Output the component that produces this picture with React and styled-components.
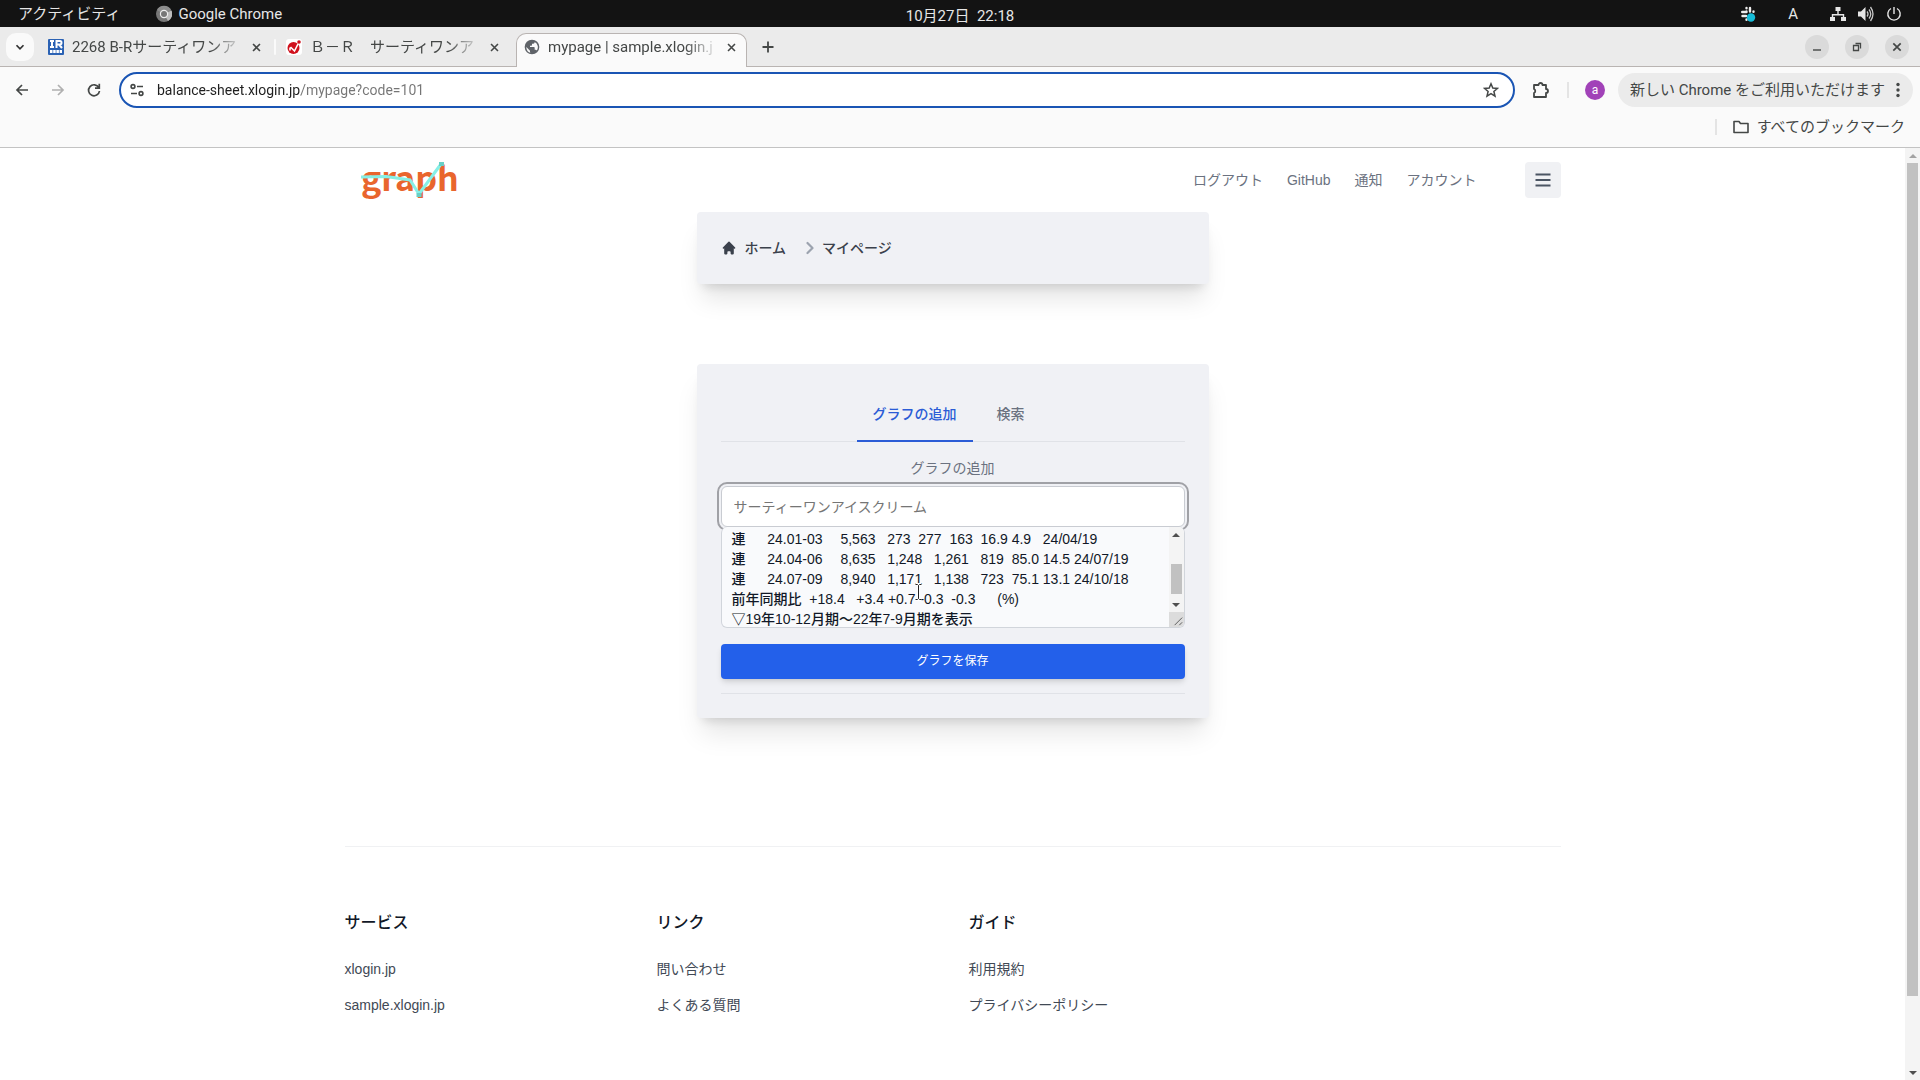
import React, { useLayoutEffect, useRef } from "react";
import styled, { createGlobalStyle } from "styled-components";

const GlobalStyle = createGlobalStyle`
  *, *::before, *::after { box-sizing: border-box; }
  body { margin: 0; overflow: hidden; }
  button, input, textarea { font: inherit; color: inherit; margin: 0; }
  button { border: 0; padding: 0; background: none; cursor: pointer; }
  a { color: inherit; text-decoration: none; }
  h2, ul, ol { margin: 0; padding: 0; list-style: none; font: inherit; }
  svg { display: block; flex: none; }
`;

const uiFont = `Roboto, "Noto Sans CJK JP", sans-serif`;
const pageFont = `"Liberation Sans", "Noto Sans CJK JP", sans-serif`;

const Desktop = styled.div`
  height: 100vh;
  display: flex;
  flex-direction: column;
  background: #fff;
  font: 15px/20px ${uiFont};
`;

/* ---------- system bar ---------- */

const SystemBar = styled.div`
  flex: none;
  height: 27px;
  display: grid;
  grid-template-columns: 1fr auto 1fr;
  align-items: center;
  padding: 0 18px;
  background: #131313;
  color: #e6e6e6;
`;

const SystemGroup = styled.div`
  display: flex;
  align-items: center;
  gap: ${(p) => p.$gap}px;
  justify-content: ${(p) => (p.$end ? "flex-end" : "flex-start")};
`;

const SystemItem = styled.button`
  display: flex;
  align-items: center;
  gap: 6px;
  white-space: nowrap;
`;

const Clock = styled.time`
  padding-top: 4px;
  white-space: pre;
`;

/* ---------- browser tabs ---------- */

const TabStrip = styled.div`
  flex: none;
  height: 40px;
  display: flex;
  align-items: stretch;
  background: #ebebeb;
  border-bottom: 1px solid #b9b4b2;
  color: #444746;
`;

const TabMenu = styled.button`
  width: 28px;
  height: 28px;
  margin: 6px 14px 0 6px;
  display: grid;
  place-items: center;
  border-radius: 10px;
  background: #fafafa;
  color: #333;
`;

const Tab = styled.div`
  width: ${(p) => p.$width}px;
  height: ${(p) => (p.$active ? 34 : 28)}px;
  margin-top: 6px;
  padding: ${(p) => (p.$active ? "0 7px 7px 7px" : "0")};
  display: flex;
  align-items: center;
  gap: 8px;
  ${(p) =>
    p.$active &&
    `
    background: #fafafa;
    border: 1px solid #b9b4b2;
    border-bottom: 0;
    border-radius: 10px 10px 0 0;
  `}
`;

const TabTitle = styled.span`
  flex: 1;
  min-width: 0;
  overflow: hidden;
  white-space: pre;
  mask-image: linear-gradient(to right, #000 82%, transparent 102%);
`;

const IconButton = styled.button`
  width: ${(p) => p.$size || 16}px;
  height: ${(p) => p.$size || 16}px;
  flex: none;
  display: grid;
  place-items: center;
  color: ${(p) => p.$color || "#444746"};
`;

const TabDivider = styled.span`
  width: 2px;
  height: 16px;
  margin: 12px 10px 0;
  border-radius: 1px;
  background: #fafafa;
`;

const TabSpacer = styled.span`
  width: 14px;
`;

const NewTab = styled(IconButton)`
  margin: 12px 0 0 13px;
`;

const WindowButtons = styled.div`
  margin: 8px 11px 0 auto;
  display: flex;
  gap: 16px;
`;

const WindowButton = styled(IconButton)`
  border-radius: 50%;
  background: #dadada;
`;

/* ---------- toolbar ---------- */

const Toolbar = styled.div`
  flex: none;
  height: 46px;
  display: flex;
  align-items: center;
  padding: 0 7px 0 12px;
  background: #fafafa;
  color: #444746;
`;

const NavButtons = styled.div`
  display: flex;
  gap: 16px;
  margin-right: 15px;
`;

const Omnibox = styled.div`
  flex: 1;
  height: 36px;
  display: flex;
  align-items: center;
  gap: 12px;
  padding: 0 14px 0 8px;
  border: 2px solid #1a55b4;
  border-radius: 18px;
  background: #fff;
`;

const UrlInput = styled.input`
  flex: 1;
  min-width: 0;
  padding: 0;
  border: 0;
  outline: 0;
  font-size: 14px;
  background: linear-gradient(to right, #1f1f1f 144px, #757575 144px);
  -webkit-background-clip: text;
  background-clip: text;
  -webkit-text-fill-color: transparent;
`;

const Actions = styled.div`
  display: flex;
  align-items: center;
  margin-left: 16px;
`;

const Divider = styled.span`
  width: 2px;
  height: 16px;
  margin: 0 ${(p) => p.$gap}px;
  background: #e4e4e4;
`;

const Avatar = styled.button`
  width: 20px;
  height: 20px;
  margin-right: 13px;
  border-radius: 50%;
  background: #a142b8;
  color: #fff;
  font-size: 12px;
  line-height: 18px;
`;

const UpdatePill = styled.button`
  height: 34px;
  display: flex;
  align-items: center;
  gap: 6px;
  padding: 0 8px 0 12px;
  border-radius: 17px;
  background: #ebebeb;
  white-space: nowrap;
`;

const BookmarkBar = styled.div`
  flex: none;
  height: 35px;
  display: flex;
  justify-content: flex-end;
  align-items: center;
  padding: 0 15px 6px 0;
  background: #fafafa;
  border-bottom: 1px solid #c3c3c3;
  color: #444746;
`;

const BookmarkLink = styled.button`
  display: flex;
  align-items: center;
  gap: 8px;
  white-space: nowrap;
`;

/* ---------- scrollbars ---------- */

const ScrollTrack = styled.div`
  flex: none;
  width: 15px;
  display: flex;
  flex-direction: column;
  align-items: center;
  background: #f4f4f4;
  color: #505050;
`;

const ScrollArrow = styled.span`
  flex: none;
  width: 15px;
  height: 15px;
  display: grid;
  place-items: center;
  color: ${(p) => (p.$muted ? "#a3a3a3" : "inherit")};
`;

const ScrollSpace = styled.span`
  flex: ${(p) => p.$share};
`;

const ScrollThumb = styled.span`
  flex: ${(p) => p.$share};
  width: 11px;
  background: #c1c1c1;
`;

const ResizeCorner = styled.span`
  width: 15px;
  height: 15px;
  flex: none;
  background: #dcdcdc;
  color: #555;
`;

/* ---------- page ---------- */

const Viewport = styled.div`
  flex: 1;
  min-height: 0;
  display: flex;
`;

const Page = styled.div`
  flex: 1;
  min-width: 0;
  overflow: hidden;
  font: 14px/20px ${pageFont};
  color: #111827;
`;

const Container = styled.div`
  max-width: 1280px;
  margin: 0 auto;
  padding: 0 32px;
`;

const Header = styled.header`
  height: 64px;
  display: flex;
  align-items: center;
  padding-left: 16px;
`;

const HeaderNav = styled.nav`
  display: flex;
  gap: 24px;
  margin: 0 48px 0 auto;
  color: #6b7280;
`;

const MenuButton = styled.button`
  width: 36px;
  height: 36px;
  display: grid;
  place-items: center;
  border-radius: 4px;
  background: #f0f1f4;
  color: #4b5563;
`;

const Main = styled.main`
  width: 512px;
  margin: 0 auto;
`;

const Card = styled.section`
  padding: ${(p) => p.$pad};
  margin-bottom: ${(p) => p.$after}px;
  border-radius: 4px;
  background: #f0f1f5;
  box-shadow: 0 20px 25px -5px rgba(0, 0, 0, 0.1), 0 8px 10px -6px rgba(0, 0, 0, 0.14);
`;

const Breadcrumb = styled.ol`
  display: flex;
  align-items: center;
  gap: 16px;
  font-weight: 500;
  color: #3b414c;
`;

const Crumb = styled.li`
  display: flex;
  align-items: center;

  a {
    display: flex;
    align-items: center;
    gap: 8px;
  }
`;

const TabList = styled.div`
  display: flex;
  justify-content: center;
  height: 54px;
  margin-bottom: 16px;
  border-bottom: 1px solid #e0e2e7;
`;

const PageTab = styled.button`
  height: 54px;
  margin-right: 8px;
  padding: 0 16px;
  font-weight: 500;
  color: ${(p) => (p.$active ? "#2b5cd6" : "#6b7280")};
  border-bottom: 2px solid ${(p) => (p.$active ? "#2b5cd6" : "transparent")};
`;

const Form = styled.form`
  display: flex;
  flex-direction: column;
  padding-bottom: 14px;
  border-bottom: 1px solid #e0e2e7;
`;

const FieldLabel = styled.label`
  margin-bottom: 8px;
  text-align: center;
  color: #6b7280;
`;

const NameInput = styled.input`
  height: 41px;
  padding: 0 12px;
  border: 1px solid #c9ccd2;
  border-radius: 6px;
  background: #fff;
  outline: 2px solid #a0a1a6;
  outline-offset: 2px;

  &::placeholder { color: #757575; opacity: 1; }
`;

const DataField = styled.div`
  position: relative;
  height: 101px;
  display: flex;
  margin-bottom: 16px;
  overflow: hidden;
  border: 1px solid #d1d5db;
  border-top: 0;
  border-radius: 6px;
  background: #f9fafc;
`;

const DataArea = styled.textarea`
  flex: 1;
  min-width: 0;
  padding: 8px 10px;
  border: 0;
  outline: 0;
  resize: none;
  overflow: hidden;
  background: transparent;
  line-height: 20px;
  font-weight: 500;
`;

const TextCursor = styled.svg`
  position: absolute;
  left: 192px;
  top: 56px;
`;

const SaveButton = styled.button`
  height: 35px;
  padding-bottom: 1px;
  border-radius: 4px;
  background: #2360ea;
  color: #fff;
  font-size: 12px;
  box-shadow: 0 4px 6px -1px rgba(0, 0, 0, 0.12), 0 2px 4px -2px rgba(0, 0, 0, 0.1);
`;

const Footer = styled.footer`
  display: grid;
  grid-template-columns: repeat(4, 1fr);
  gap: 32px;
  padding-top: 64px;
  border-top: 1px solid #f0f1f3;
`;

const FooterTitle = styled.h2`
  margin-bottom: 24px;
  font-size: 16px;
  line-height: 24px;
  font-weight: 500;
`;

const FooterLinks = styled.ul`
  display: flex;
  flex-direction: column;
  gap: 16px;
  color: #414955;
`;

/* ---------- drawings ---------- */

const Stroke = ({ size = 16, w = 2, box = 16, children }) => (
  <svg width={size} height={size} viewBox={`0 0 ${box} ${box}`} fill="none" stroke="currentColor" strokeWidth={w} aria-hidden="true">
    {children}
  </svg>
);

const CloseIcon = ({ size = 16 }) => (
  <Stroke size={size} w={1.7}><path d="M4.3 4.3l7.4 7.4M11.7 4.3l-7.4 7.4" /></Stroke>
);

const ChromeIcon = () => (
  <svg width="16" height="18" viewBox="0 0 16 16" aria-hidden="true">
    <circle cx="8" cy="8" r="8" fill="#777" />
    <path d="M8 8L1 4A8 8 0 0 1 15 4z" fill="#8c8c8c" />
    <path d="M8 8l4 7a8 8 0 0 0 3.500-10.500z" fill="#bdbdbd" />
    <circle cx="8" cy="8" r="4.200" fill="#eee" />
    <circle cx="8" cy="8" r="3" fill="#777" />
  </svg>
);

const BankIcon = () => (
  <svg width="16" height="16" viewBox="0 0 16 16" aria-hidden="true">
    <rect width="16" height="16" rx="1" fill="#2b62b4" />
    <g fill="none" stroke="#fff" strokeWidth="2">
      <path d="M2 2h4M4 2v6M2 8h4M8.500 9V2h3.500q1.500 0 1.500 1.700t-1.500 1.700H8.500M11 5.500l3 3.500" />
      <path d="M2 12.500h12" strokeWidth="3" strokeDasharray="2.500 .7" />
    </g>
  </svg>
);

const RedIcon = () => (
  <svg width="16" height="16" viewBox="0 0 16 16" aria-hidden="true">
    <rect width="16" height="16" rx="3" fill="#fff" />
    <circle cx="7.500" cy="9" r="6" fill="#d0101c" />
    <circle cx="13" cy="3" r="1.800" fill="#d0101c" />
    <path d="M4 8.500v3M4.500 8l4 4L12 5" fill="none" stroke="#fff" strokeWidth="1.600" />
  </svg>
);

const GlobeIcon = () => (
  <svg width="16" height="16" viewBox="0 0 24 24" fill="#5f6368" aria-hidden="true">
    <path d="M12 1a11 11 0 1 0 0 22 11 11 0 0 0 0-22zM3.500 12l5.500 5.500V19c0 .8.500 1.500 1.300 1.800A8.900 8.900 0 0 1 3.500 12zm15.700 5.400c-.3-.9-1.100-1.400-2-1.400H16v-3c0-.6-.4-1-1-1H9v-2h2c.6 0 1-.4 1-1V7h2c1.100 0 2-.9 2-2v-.5a8.900 8.900 0 0 1 3.200 12.900z" />
  </svg>
);

const SlackIcon = () => (
  <svg width="16" height="16" viewBox="0 0 16 16" aria-hidden="true">
    <g stroke="#eee" strokeWidth="2.400" strokeLinecap="round">
      <path d="M6.500 5.500V6M6.500 2v.2M10 2v3.500M2.200 6h4M13.500 5.500v.2M2.500 10H6M6.500 13.500v.2" />
    </g>
    <circle cx="11" cy="11.500" r="4.200" fill="#17bcd8" />
  </svg>
);

const NetworkIcon = () => (
  <svg width="16" height="16" viewBox="0 0 16 16" fill="#e6e6e6" aria-hidden="true">
    <path d="M5.500 1h5v4h-5zM0 11h5v4H0zM11 11h5v4h-5zM7.300 5h1.400v3h5.500v3h-1.400V9.400H3.200V11H1.800V8h5.500z" />
  </svg>
);

const SpeakerIcon = () => (
  <svg width="16" height="16" viewBox="0 0 16 16" aria-hidden="true">
    <path d="M0 5.500h3L7.500 1v14L3 10.500H0z" fill="#e6e6e6" />
    <path d="M9 5.500q2 2.500 0 5M11 3.500q3.500 4.500 0 9M12.500 1q5 7 0 14" fill="none" stroke="#c8c8c8" strokeWidth="1.300" />
  </svg>
);

const TuneIcon = () => (
  <Stroke w={1.6}><circle cx="4" cy="4.500" r="1.900" /><path d="M8 4.500h6M2 11.500h6" /><circle cx="12" cy="11.500" r="1.900" /></Stroke>
);

const HomeIcon = () => (
  <svg width="16" height="16" viewBox="0 0 20 20" fill="currentColor" aria-hidden="true">
    <path d="M10.700 2.300a1 1 0 0 0-1.400 0l-7 7a1 1 0 0 0 1.400 1.400l.3-.3V17a1 1 0 0 0 1 1h2a1 1 0 0 0 1-1v-2a1 1 0 0 1 1-1h2a1 1 0 0 1 1 1v2a1 1 0 0 0 1 1h2a1 1 0 0 0 1-1v-6.600l.3.3a1 1 0 0 0 1.400-1.400z" />
  </svg>
);

const Logo = () => (
  <svg width="112" height="60" viewBox="0 -6 112 60" role="img" aria-label="graph">
    <text x="0" y="35" fill="#e9652d" fontFamily="'Noto Sans CJK JP', sans-serif" fontWeight="700" fontSize="34">graph</text>
    <path d="M0 21L25 20.500 49 24 58 38 80 8" fill="none" stroke="#86efe6" strokeWidth="3" />
    <path d="M55.500 37h5v4h-5zM78 6h5v4h-5z" fill="#69cfc6" />
  </svg>
);

const Arrow = ({ down }) => (
  <svg width="8" height="4" viewBox="0 0 8 4" fill="currentColor" aria-hidden="true">
    <path d={down ? "M0 0h8L4 4z" : "M0 4h8L4 0z"} />
  </svg>
);

const Scrollbar = ({ before, thumb, after, corner }) => (
  <ScrollTrack aria-hidden="true">
    <ScrollArrow $muted={before === 0}><Arrow /></ScrollArrow>
    <ScrollSpace $share={before} />
    <ScrollThumb $share={thumb} />
    <ScrollSpace $share={after} />
    <ScrollArrow><Arrow down /></ScrollArrow>
    {corner && (
      <ResizeCorner>
        <Stroke size={15} w={1}><path d="M6 14l8-8M11 14l3-3" /></Stroke>
      </ResizeCorner>
    )}
  </ScrollTrack>
);

/* ---------- content ---------- */

const results = [
  "", "", "", "",
  "連　  24.01-03　 5,563   273  277  163  16.9 4.9   24/04/19",
  "連　  24.04-06　 8,635   1,248   1,261   819  85.0 14.5 24/07/19",
  "連　  24.07-09　 8,940   1,171   1,138   723  75.1 13.1 24/10/18",
  "前年同期比  +18.4   +3.4 +0.7 -0.3  -0.3　  (%)",
  "▽19年10-12月期〜22年7-9月期を表示",
].join("\n");

const footerColumns = [
  { title: "サービス", links: ["xlogin.jp", "sample.xlogin.jp"] },
  { title: "リンク", links: ["問い合わせ", "よくある質問"] },
  { title: "ガイド", links: ["利用規約", "プライバシーポリシー"] },
];

const BrowserTab = ({ icon, title, active, width }) => (
  <Tab $active={active} $width={width}>
    {icon}
    <TabTitle>{title}</TabTitle>
    <IconButton aria-label="閉じる"><CloseIcon size={15} /></IconButton>
  </Tab>
);

export default function App() {
  const area = useRef(null);

  useLayoutEffect(() => {
    const el = area.current;
    el.scrollTop = el.scrollHeight - el.clientHeight - 10;
  }, []);

  return (
    <Desktop>
      <GlobalStyle />
      <SystemBar>
        <SystemGroup $gap={36}>
          <SystemItem>アクティビティ</SystemItem>
          <SystemItem><ChromeIcon />Google Chrome</SystemItem>
        </SystemGroup>
        <Clock>10月27日  22:18</Clock>
        <SystemGroup $gap={12} $end>
          <SystemGroup $gap={32}>
            <SlackIcon />
            <span>A</span>
            <NetworkIcon />
          </SystemGroup>
          <SpeakerIcon />
          <Stroke w={1.4}><path d="M8 1v7M5 2.500a6.200 6.200 0 1 0 6 0" /></Stroke>
        </SystemGroup>
      </SystemBar>

      <TabStrip>
        <TabMenu aria-label="タブを検索"><Stroke size={14} w={2}><path d="M4 6l4 4 4-4" /></Stroke></TabMenu>
        <BrowserTab icon={<BankIcon />} title="2268 B-Rサーティワンア" width={216} />
        <TabDivider />
        <BrowserTab icon={<RedIcon />} title="Ｂ－Ｒ　サーティワンア" width={216} />
        <TabSpacer />
        <BrowserTab icon={<GlobeIcon />} title="mypage | sample.xlogin.j" width={231} active />
        <NewTab aria-label="新しいタブ"><Stroke w={1.8}><path d="M8 2.500v11M2.500 8h11" /></Stroke></NewTab>
        <WindowButtons>
          <WindowButton $size={24} aria-label="最小化"><Stroke w={1.4}><path d="M4 11h8" /></Stroke></WindowButton>
          <WindowButton $size={24} aria-label="元に戻す"><Stroke w={1.3}><path d="M4.500 6.500h5v5h-5zM6.500 4.500h5v5" /></Stroke></WindowButton>
          <WindowButton $size={24} aria-label="閉じる"><CloseIcon /></WindowButton>
        </WindowButtons>
      </TabStrip>

      <Toolbar>
        <NavButtons>
          <IconButton $size={20} aria-label="戻る"><Stroke w={1.7}><path d="M14 8H3M8 3L3 8l5 5" /></Stroke></IconButton>
          <IconButton $size={20} $color="#b0b0b0" aria-label="進む"><Stroke w={1.7}><path d="M2 8h11M8 3l5 5-5 5" /></Stroke></IconButton>
          <IconButton $size={20} aria-label="再読み込み"><Stroke w={1.7}><path d="M12.800 5.500A5.500 5.500 0 1 0 13.500 9M13.300 1.800v4.400H9" /></Stroke></IconButton>
        </NavButtons>
        <Omnibox>
          <TuneIcon />
          <UrlInput aria-label="アドレス" defaultValue="balance-sheet.xlogin.jp/mypage?code=101" />
          <IconButton aria-label="ブックマークに追加">
            <Stroke w={1.5}><path d="M8 1.800l1.800 4.200 4.700.4-3.600 3.100 1.100 4.600L8 11.700l-4 2.400 1.100-4.600L1.500 6.400 6.200 6z" /></Stroke>
          </IconButton>
        </Omnibox>
        <Actions>
          <IconButton $size={20} aria-label="拡張機能">
            <Stroke size={18} w={1.8} box={18}><path d="M2 4h4.500a2 2 0 0 1 4 0H14v4a2 2 0 0 1 0 4v4H2v-4a2.200 2.200 0 0 0 0-4z" strokeLinejoin="round" /></Stroke>
          </IconButton>
          <Divider $gap={16} />
          <Avatar>a</Avatar>
          <UpdatePill>
            新しい Chrome をご利用いただけます
            <svg width="14" height="16" viewBox="0 0 14 16" fill="currentColor" aria-hidden="true">
              <circle cx="7" cy="2.500" r="1.700" /><circle cx="7" cy="8" r="1.700" /><circle cx="7" cy="13.500" r="1.700" />
            </svg>
          </UpdatePill>
        </Actions>
      </Toolbar>
      <BookmarkBar>
        <Divider $gap={16} />
        <BookmarkLink>
          <Stroke size={16} w={1.6}><path d="M1 2.500h5l1.500 2H15v9H1z" strokeLinejoin="round" /></Stroke>
          すべてのブックマーク
        </BookmarkLink>
      </BookmarkBar>

      <Viewport>
        <Page>
          <Container>
            <Header>
              <a href="#top"><Logo /></a>
              <HeaderNav>
                <a href="#logout">ログアウト</a>
                <a href="#github">GitHub</a>
                <a href="#notice">通知</a>
                <a href="#account">アカウント</a>
              </HeaderNav>
              <MenuButton aria-label="メニュー"><Stroke w={2}><path d="M.5 2.500h15M.5 8h15M.5 13.500h15" /></Stroke></MenuButton>
            </Header>
          </Container>

          <Main>
            <Card as="nav" $pad="26px 24px" $after={80}>
              <Breadcrumb>
                <Crumb><a href="#home"><HomeIcon />ホーム</a></Crumb>
                <Crumb>
                  <a href="#mypage">
                    <svg width="12" height="14" viewBox="0 0 12 14" fill="none" stroke="#9ca3af" strokeWidth="2.200" strokeLinecap="round" strokeLinejoin="round" aria-hidden="true"><path d="M5.500 2l5 5-5 5" /></svg>
                    マイページ
                  </a>
                </Crumb>
              </Breadcrumb>
            </Card>

            <Card $pad="24px" $after={128}>
              <TabList role="tablist">
                <PageTab role="tab" aria-selected="true" $active>グラフの追加</PageTab>
                <PageTab role="tab" aria-selected="false">検索</PageTab>
              </TabList>
              <Form onSubmit={(e) => e.preventDefault()}>
                <FieldLabel htmlFor="name">グラフの追加</FieldLabel>
                <NameInput id="name" placeholder="サーティーワンアイスクリーム" />
                <DataField>
                  <DataArea ref={area} aria-label="業績データ" spellCheck={false} wrap="off" defaultValue={results} />
                  <Scrollbar before={22} thumb={30} after={3} corner />
                  <TextCursor width="9" height="18" viewBox="0 0 9 18" fill="none" aria-hidden="true">
                    <path d="M1.500 1.500h2l1 1 1-1h2M4.500 2.500v13M1.500 16.500h2l1-1 1 1h2" stroke="#fff" strokeWidth="3" />
                    <path d="M1.500 1.500h2l1 1 1-1h2M4.500 2.500v13M1.500 16.500h2l1-1 1 1h2" stroke="#222" />
                  </TextCursor>
                </DataField>
                <SaveButton type="submit">グラフを保存</SaveButton>
              </Form>
            </Card>
          </Main>

          <Container>
            <Footer>
              {footerColumns.map((col) => (
                <div key={col.title}>
                  <FooterTitle>{col.title}</FooterTitle>
                  <FooterLinks>
                    {col.links.map((text) => <li key={text}><a href="#link">{text}</a></li>)}
                  </FooterLinks>
                </div>
              ))}
            </Footer>
          </Container>
        </Page>
        <Scrollbar before={0} thumb={833} after={69} />
      </Viewport>
    </Desktop>
  );
}
